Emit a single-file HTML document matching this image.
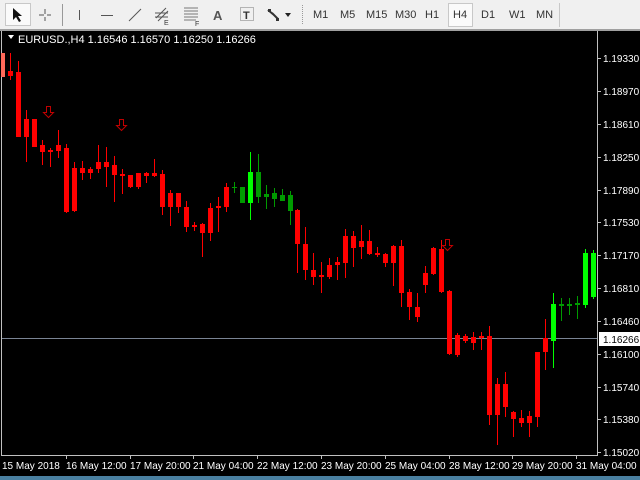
<!DOCTYPE html>
<html><head><meta charset="utf-8"><style>
html,body{margin:0;padding:0;width:640px;height:480px;overflow:hidden;background:#000;font-family:"Liberation Sans",sans-serif}
#tb{position:absolute;left:0;top:0;width:640px;height:29px;background:#f0f0f0;border-bottom:2px solid #a0a0a0}
.tf{position:absolute;top:9px;font-size:11px;color:#333}
svg text{font-family:"Liberation Sans",sans-serif}
</style></head><body>
<div id="tb">
<svg width="640" height="29" style="position:absolute;left:0;top:0">
<rect x="5.5" y="3.5" width="25" height="22" fill="#fafafa" stroke="#c8c8c8"/>
<path d="M13 8 L13 20 L16 17 L19 22 L21 21 L18 16 L22 16 Z" fill="#111"/>
<path d="M45 9 V21 M39 15 H51" stroke="#555" stroke-width="1"/>
<rect x="44" y="14" width="3" height="3" fill="#f0f0f0"/>
<line x1="62.5" y1="4" x2="62.5" y2="26" stroke="#999"/>
<line x1="79.5" y1="10" x2="79.5" y2="20" stroke="#555"/>
<line x1="101" y1="15.5" x2="113" y2="15.5" stroke="#555"/>
<line x1="129" y1="21" x2="141" y2="9" stroke="#555"/>
<path d="M156 18 L166 8 M158 21 L168 11 M155 13 H168 M155 17 H168" stroke="#555" fill="none"/>
<text x="164" y="25" font-size="7" fill="#333">E</text>
<path d="M184 8 H198 M184 11 H198 M184 14 H198 M184 17 H198 M184 20 H196" stroke="#777"/>
<text x="195" y="26" font-size="7" fill="#333">F</text>
<text x="213" y="20" font-size="13" font-weight="bold" fill="#555">A</text>
<rect x="240.5" y="7.5" width="13" height="13" fill="none" stroke="#777" stroke-dasharray="1,1"/>
<text x="243" y="19" font-size="11" font-weight="bold" fill="#333">T</text>
<path d="M268 10 L274 15 M272 13 L278 19" stroke="#333" stroke-width="2"/>
<rect x="268" y="9" width="3" height="3" fill="#333"/><rect x="276" y="18" width="3" height="3" fill="#333"/>
<path d="M285 13 H291 L288 17 Z" fill="#222"/>
<path d="M302.5 5 V25" stroke="#999" stroke-dasharray="1,1"/>
<rect x="448.5" y="3.5" width="24" height="23" fill="#fafafa" stroke="#c8c8c8"/>
<line x1="559.5" y1="3" x2="559.5" y2="27" stroke="#c8c8c8"/>
</svg>
<span class="tf" style="left:313px">M1</span>
<span class="tf" style="left:340px">M5</span>
<span class="tf" style="left:366px">M15</span>
<span class="tf" style="left:395px">M30</span>
<span class="tf" style="left:425px">H1</span>
<span class="tf" style="left:453px">H4</span>
<span class="tf" style="left:481px">D1</span>
<span class="tf" style="left:509px">W1</span>
<span class="tf" style="left:536px">MN</span>
</div>
<svg width="640" height="449" style="position:absolute;left:0;top:31px" viewBox="0 31 640 449">
<rect x="0" y="31" width="640" height="449" fill="#000"/>
<line x1="1.5" y1="31" x2="1.5" y2="455" stroke="#c0c0c0"/>
<line x1="597.5" y1="31" x2="597.5" y2="456" stroke="#c0c0c0"/>
<line x1="1" y1="455.5" x2="598" y2="455.5" stroke="#c0c0c0"/>
<line x1="2" y1="338.5" x2="597" y2="338.5" stroke="#7a8494"/>
<path d="M8 35 H14 L11 39 Z" fill="#fff"/>
<text x="18" y="43" font-size="11" fill="#fff">EURUSD.,H4  1.16546 1.16570 1.16250 1.16266</text>
<g fill="#ff0000">
<rect x="1" y="53" width="4" height="24" fill="#ff6a5a"/>
<rect x="10" y="53" width="1" height="27"/><rect x="8" y="71" width="5" height="5"/>
<rect x="18" y="61" width="1" height="76"/><rect x="16" y="72" width="5" height="65"/>
<rect x="26" y="110" width="1" height="52"/><rect x="24" y="119" width="5" height="18"/>
<rect x="34" y="119" width="1" height="28"/><rect x="32" y="119" width="5" height="28"/>
<rect x="42" y="140" width="1" height="25"/><rect x="40" y="145" width="5" height="7"/>
<rect x="50" y="148" width="1" height="19"/><rect x="48" y="150" width="5" height="2"/>
<rect x="58" y="130" width="1" height="28"/><rect x="56" y="145" width="5" height="6"/>
<rect x="66" y="144" width="1" height="69"/><rect x="64" y="148" width="5" height="64"/>
<rect x="74" y="162" width="1" height="50"/><rect x="72" y="168" width="5" height="43"/>
<rect x="82" y="161" width="1" height="19"/><rect x="80" y="168" width="5" height="5"/>
<rect x="90" y="167" width="1" height="12"/><rect x="88" y="169" width="5" height="4"/>
<rect x="98" y="145" width="1" height="28"/><rect x="96" y="162" width="5" height="7"/>
<rect x="106" y="147" width="1" height="40"/><rect x="104" y="162" width="5" height="5"/>
<rect x="114" y="156" width="1" height="46"/><rect x="112" y="165" width="5" height="10"/>
<rect x="122" y="169" width="1" height="25"/><rect x="120" y="174" width="5" height="2"/>
<rect x="130" y="175" width="1" height="13"/><rect x="128" y="175" width="5" height="12"/>
<rect x="138" y="173" width="1" height="16"/><rect x="136" y="173" width="5" height="14"/>
<rect x="146" y="172" width="1" height="11"/><rect x="144" y="173" width="5" height="3"/>
<rect x="154" y="159" width="1" height="18"/><rect x="152" y="173" width="5" height="3"/>
<rect x="162" y="170" width="1" height="45"/><rect x="160" y="174" width="5" height="33"/>
<rect x="170" y="190" width="1" height="36"/><rect x="168" y="193" width="5" height="14"/>
<rect x="178" y="193" width="1" height="20"/><rect x="176" y="193" width="5" height="14"/>
<rect x="186" y="201" width="1" height="31"/><rect x="184" y="207" width="5" height="20"/>
<rect x="194" y="222" width="1" height="9"/><rect x="192" y="225" width="5" height="2"/>
<rect x="202" y="223" width="1" height="34"/><rect x="200" y="224" width="5" height="9"/>
<rect x="210" y="203" width="1" height="38"/><rect x="208" y="208" width="5" height="25"/>
<rect x="218" y="197" width="1" height="35"/><rect x="216" y="206" width="5" height="2"/>
<rect x="226" y="183" width="1" height="29"/><rect x="224" y="187" width="5" height="20"/>
<rect x="297" y="209" width="1" height="64"/><rect x="295" y="210" width="5" height="34"/>
<rect x="305" y="227" width="1" height="53"/><rect x="303" y="244" width="5" height="26"/>
<rect x="313" y="253" width="1" height="32"/><rect x="311" y="270" width="5" height="7"/>
<rect x="321" y="262" width="1" height="31"/><rect x="319" y="275" width="5" height="2"/>
<rect x="329" y="258" width="1" height="21"/><rect x="327" y="265" width="5" height="12"/>
<rect x="337" y="257" width="1" height="23"/><rect x="335" y="262" width="5" height="3"/>
<rect x="345" y="229" width="1" height="49"/><rect x="343" y="236" width="5" height="27"/>
<rect x="353" y="231" width="1" height="36"/><rect x="351" y="236" width="5" height="12"/>
<rect x="361" y="225" width="1" height="34"/><rect x="359" y="241" width="5" height="6"/>
<rect x="369" y="230" width="1" height="25"/><rect x="367" y="241" width="5" height="13"/>
<rect x="377" y="247" width="1" height="10"/><rect x="375" y="253" width="5" height="2"/>
<rect x="385" y="253" width="1" height="14"/><rect x="383" y="254" width="5" height="9"/>
<rect x="393" y="245" width="1" height="41"/><rect x="391" y="246" width="5" height="17"/>
<rect x="401" y="240" width="1" height="67"/><rect x="399" y="246" width="5" height="47"/>
<rect x="409" y="289" width="1" height="31"/><rect x="407" y="292" width="5" height="15"/>
<rect x="417" y="293" width="1" height="29"/><rect x="415" y="307" width="5" height="10"/>
<rect x="425" y="266" width="1" height="27"/><rect x="423" y="273" width="5" height="12"/>
<rect x="433" y="247" width="1" height="28"/><rect x="431" y="248" width="5" height="26"/>
<rect x="441" y="240" width="1" height="53"/><rect x="439" y="249" width="5" height="43"/>
<rect x="449" y="290" width="1" height="65"/><rect x="447" y="291" width="5" height="63"/>
<rect x="457" y="333" width="1" height="24"/><rect x="455" y="335" width="5" height="20"/>
<rect x="465" y="334" width="1" height="9"/><rect x="463" y="336" width="5" height="5"/>
<rect x="473" y="332" width="1" height="18"/><rect x="471" y="337" width="5" height="6"/>
<rect x="481" y="332" width="1" height="18"/><rect x="479" y="336" width="5" height="2"/>
<rect x="489" y="326" width="1" height="99"/><rect x="487" y="336" width="5" height="79"/>
<rect x="497" y="378" width="1" height="67"/><rect x="495" y="384" width="5" height="31"/>
<rect x="505" y="372" width="1" height="45"/><rect x="503" y="384" width="5" height="23"/>
<rect x="513" y="411" width="1" height="26"/><rect x="511" y="412" width="5" height="7"/>
<rect x="521" y="410" width="1" height="17"/><rect x="519" y="418" width="5" height="5"/>
<rect x="529" y="411" width="1" height="26"/><rect x="527" y="416" width="5" height="7"/>
<rect x="537" y="352" width="1" height="75"/><rect x="535" y="352" width="5" height="65"/>
<rect x="545" y="319" width="1" height="51"/><rect x="543" y="338" width="5" height="14"/>
</g>
<g fill="#009a00">
<rect x="234" y="182" width="1" height="11"/><rect x="232" y="187" width="5" height="1"/>
<rect x="242" y="187" width="1" height="16"/><rect x="240" y="187" width="5" height="16"/>
<rect x="258" y="154" width="1" height="49"/><rect x="256" y="172" width="5" height="25"/>
<rect x="266" y="185" width="1" height="24"/><rect x="264" y="194" width="5" height="3"/>
<rect x="274" y="188" width="1" height="19"/><rect x="272" y="193" width="5" height="6"/>
<rect x="282" y="189" width="1" height="12"/><rect x="280" y="195" width="5" height="6"/>
<rect x="290" y="191" width="1" height="34"/><rect x="288" y="195" width="5" height="16"/>
<rect x="561" y="298" width="1" height="23"/><rect x="559" y="304" width="5" height="2"/>
<rect x="569" y="298" width="1" height="17"/><rect x="567" y="304" width="5" height="2"/>
<rect x="577" y="296" width="1" height="23"/><rect x="575" y="303" width="5" height="2"/>
</g>
<g fill="#00ff00">
<rect x="250" y="152" width="1" height="68"/><rect x="248" y="172" width="5" height="31"/>
<rect x="553" y="293" width="1" height="75"/><rect x="551" y="304" width="5" height="37"/>
<rect x="585" y="249" width="1" height="59"/><rect x="583" y="253" width="5" height="52"/>
<rect x="593" y="250" width="1" height="49"/><rect x="591" y="253" width="5" height="44"/>
</g>
<g fill="none" stroke="#c00000" stroke-width="1">
<path d="M46.5 106.5 H50.5 V112.5 H53.5 L48.5 117.5 L43.5 112.5 H46.5 Z"/>
<path d="M119.5 119.5 H123.5 V125.5 H126.5 L121.5 130.5 L116.5 125.5 H119.5 Z"/>
<path d="M445.5 239.5 H449.5 V245.5 H452.5 L447.5 250.5 L442.5 245.5 H445.5 Z"/>
</g>
<g fill="#fff" font-size="10">
<path d="M598 58.5h3M598 91.5h3M598 124.5h3M598 157.5h3M598 190.5h3M598 222.5h3M598 255.5h3M598 288.5h3M598 321.5h3M598 354.5h3M598 387.5h3M598 419.5h3M598 452.5h3" stroke="#c0c0c0"/>
<text x="603" y="62">1.19330</text>
<text x="603" y="95">1.18970</text>
<text x="603" y="128">1.18610</text>
<text x="603" y="161">1.18250</text>
<text x="603" y="194">1.17890</text>
<text x="603" y="226">1.17530</text>
<text x="603" y="259">1.17170</text>
<text x="603" y="292">1.16810</text>
<text x="603" y="325">1.16460</text>
<rect x="599" y="332" width="41" height="14" fill="#fff"/>
<text x="603" y="343" fill="#000">1.16266</text>
<text x="603" y="358">1.16100</text>
<text x="603" y="391">1.15740</text>
<text x="603" y="423">1.15380</text>
<text x="603" y="456">1.15020</text>
<path d="M66.5 456v3M130.5 456v3M193.5 456v3M257.5 456v3M321.5 456v3M385.5 456v3M449.5 456v3M512.5 456v3M576.5 456v3" stroke="#c0c0c0"/>
<text x="2" y="469">15 May 2018</text>
<text x="66" y="469">16 May 12:00</text>
<text x="130" y="469">17 May 20:00</text>
<text x="193" y="469">21 May 04:00</text>
<text x="257" y="469">22 May 12:00</text>
<text x="321" y="469">23 May 20:00</text>
<text x="385" y="469">25 May 04:00</text>
<text x="449" y="469">28 May 12:00</text>
<text x="512" y="469">29 May 20:00</text>
<text x="576" y="469">31 May 04:00</text>
</g>
<rect x="0" y="476" width="640" height="4" fill="#4a80a0"/>
</svg>
</body></html>
